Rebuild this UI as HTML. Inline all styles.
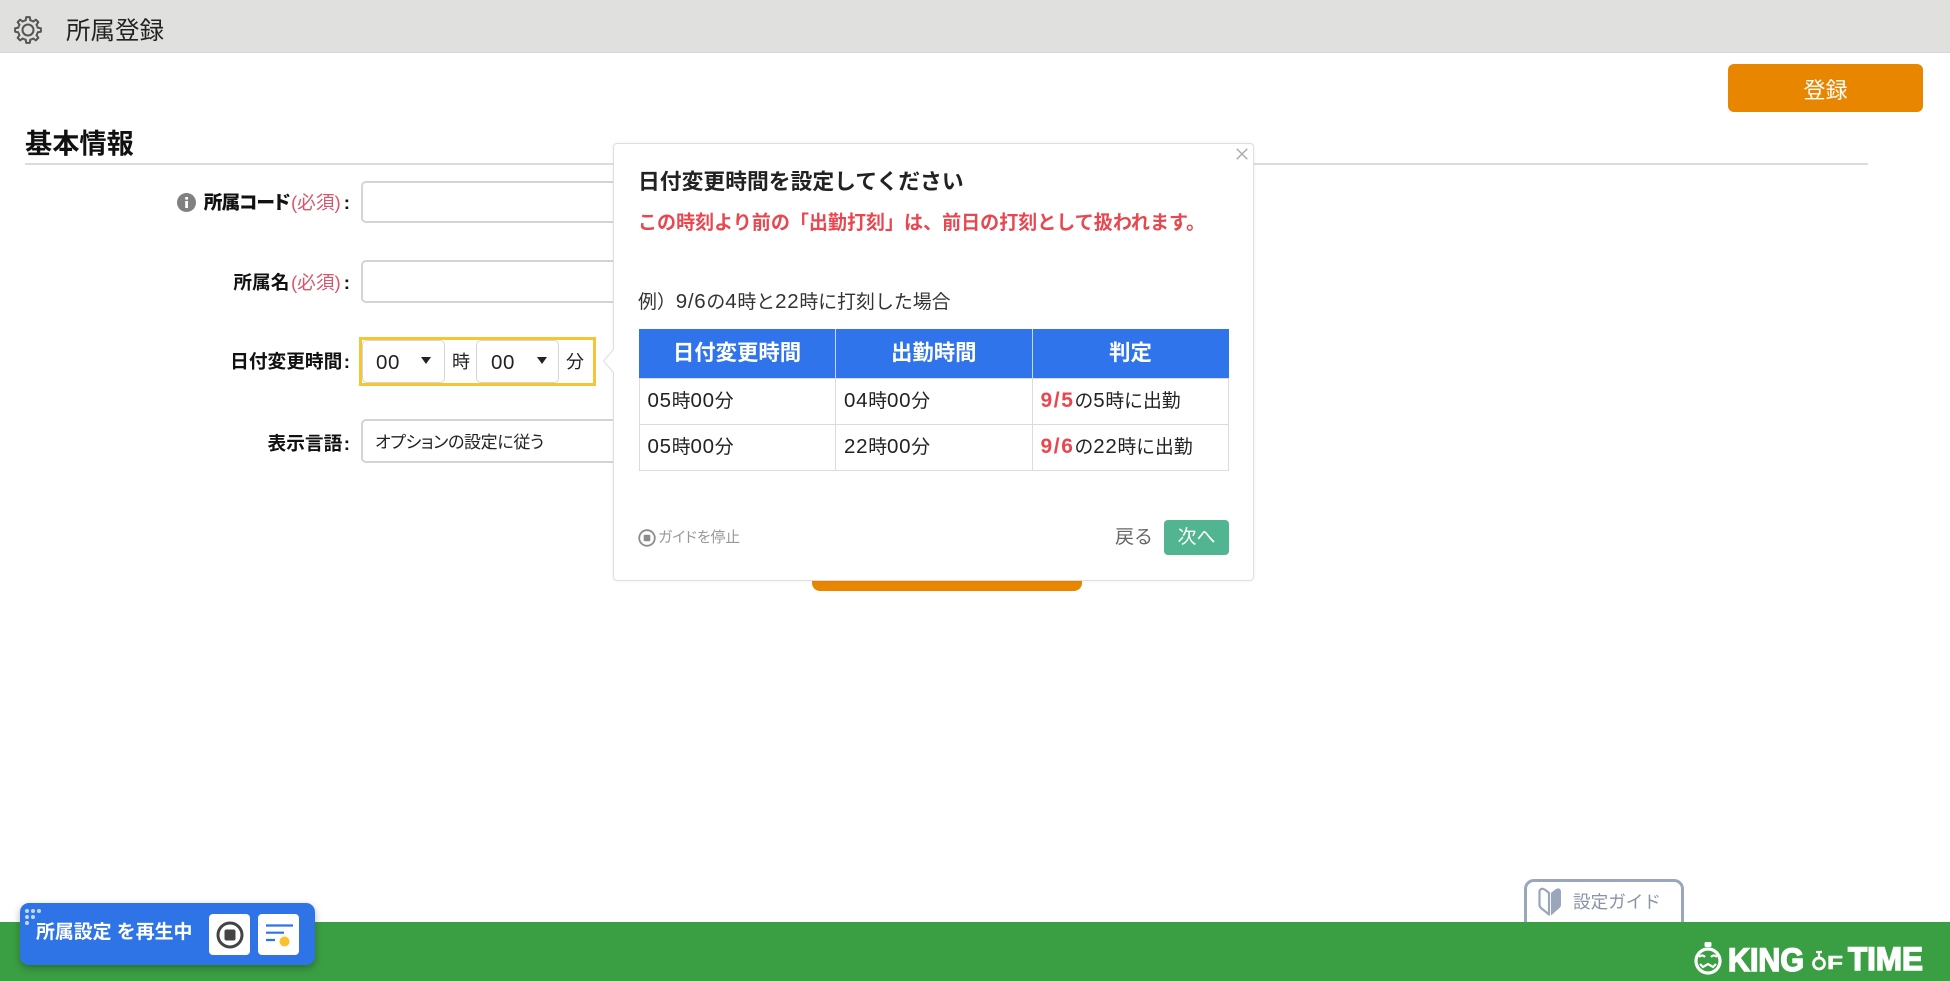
<!DOCTYPE html>
<html lang="ja">
<head>
<meta charset="utf-8">
<title>所属登録</title>
<style>
*{box-sizing:border-box}
html,body{margin:0;padding:0;background:#fff}
body{width:1950px;height:981px;overflow:hidden;position:relative;font-family:"Liberation Sans","Noto Sans CJK JP",sans-serif;color:#222}
.a{position:absolute;white-space:nowrap}
.lab{position:absolute;right:1600px;font-size:18.7px;font-weight:700;line-height:24px;color:#111;white-space:nowrap;font-feature-settings:"palt"}
.lab span{color:#d9566b;font-weight:400;padding:0 1.5px}
.lab i{font-style:normal;margin-left:1.5px}
.inp{position:absolute;left:361px;width:340px;background:#fff;border:2px solid #d4d4d4;border-radius:5px}
.sel{position:absolute;top:340px;width:83px;height:43px;background:#fff;border:1px solid #d6d6d6;border-radius:5px}
.tri{position:absolute;width:0;height:0;border-left:5.5px solid transparent;border-right:5.5px solid transparent;border-top:7px solid #222}
table{position:absolute;left:638.5px;top:329px;width:590.5px;height:141px;border-collapse:collapse;table-layout:fixed;font-size:18.8px}
th{background:#2f74ea;color:#fff;font-size:21.4px;font-weight:700;height:49px;border-right:1px solid #c7d8f6;padding:0 0 4px;text-align:center}
th:last-child{border-right:0}
td{border:1px solid #dcdcdc;padding:0 0 3px 8px;height:46px;color:#222}
td b{color:#e8474f;font-size:21px;letter-spacing:1.6px}
.d{font-size:20.5px;letter-spacing:.7px}
</style>
</head>
<body>
<!-- header -->
<div class="a" style="left:0;top:0;width:1950px;height:53px;background:#e0e0de;border-bottom:1px solid #d8d8d6"></div>
<svg class="a" style="left:12px;top:15px" width="32" height="30" viewBox="-16 -15 32 30"><g fill="none" stroke="#555" stroke-width="2" stroke-linejoin="round"><path d="M-3.830-9.240L-2.250-9.740-1.810-12.870H1.810L2.250-9.740 3.830-9.240"/><path transform="rotate(45)" d="M-3.830-9.240L-2.250-9.740-1.810-12.870H1.810L2.250-9.740 3.830-9.240"/><path transform="rotate(90)" d="M-3.830-9.240L-2.250-9.740-1.810-12.870H1.810L2.250-9.740 3.830-9.240"/><path transform="rotate(135)" d="M-3.830-9.240L-2.250-9.740-1.810-12.870H1.810L2.250-9.740 3.830-9.240"/><path transform="rotate(180)" d="M-3.830-9.240L-2.250-9.740-1.810-12.870H1.810L2.250-9.740 3.830-9.240"/><path transform="rotate(225)" d="M-3.830-9.240L-2.250-9.740-1.810-12.870H1.810L2.250-9.740 3.830-9.240"/><path transform="rotate(270)" d="M-3.830-9.240L-2.250-9.740-1.810-12.870H1.810L2.250-9.740 3.830-9.240"/><path transform="rotate(315)" d="M-3.830-9.240L-2.250-9.740-1.810-12.870H1.810L2.250-9.740 3.830-9.240"/><circle r="5.500"/></g></svg>
<div class="a" style="left:66px;top:15px;font-size:24.5px;line-height:34px;color:#222">所属登録</div>
<div class="a" style="left:1728px;top:64px;width:195px;height:48px;background:#e98600;border-radius:6px;color:#fff;font-size:22px;line-height:53px;text-align:center">登録</div>

<!-- section -->
<div class="a" style="left:25px;top:125px;font-size:27.2px;font-weight:700;line-height:38px;color:#111">基本情報</div>
<div class="a" style="left:25px;top:163px;width:1843px;height:2px;background:#dcdcdc"></div>

<!-- form -->
<svg class="a" style="left:177px;top:193px" width="19" height="19" viewBox="0 0 19 19"><circle cx="9.5" cy="9.5" r="9.5" fill="#808080"/><rect x="8.2" y="8" width="2.8" height="7" fill="#fff"/><rect x="8.2" y="4" width="2.8" height="2.6" fill="#fff"/></svg>
<div class="lab" style="top:191px"><b style="letter-spacing:-.9px">所属コード</b><span>(必須)</span><i>:</i></div>
<div class="inp" style="top:181px;height:42px"></div>
<div class="lab" style="top:271px">所属名<span>(必須)</span><i>:</i></div>
<div class="inp" style="top:260px;height:43px"></div>
<div class="lab" style="top:350px">日付変更時間<i>:</i></div>
<div class="a" style="left:359px;top:337px;width:237px;height:49px;border:3px solid #f4c534"></div>
<div class="sel" style="left:362px"></div>
<div class="a" style="left:376px;top:349px;font-size:20.5px;line-height:28px;letter-spacing:.6px">00</div>
<div class="tri" style="left:421px;top:357px"></div>
<div class="a" style="left:452px;top:349px;font-size:18px;line-height:26px">時</div>
<div class="sel" style="left:476px"></div>
<div class="a" style="left:491px;top:349px;font-size:20.5px;line-height:28px;letter-spacing:.6px">00</div>
<div class="tri" style="left:537px;top:357px"></div>
<div class="a" style="left:566px;top:349px;font-size:18px;line-height:26px">分</div>
<div class="lab" style="top:432px">表示言語<i>:</i></div>
<div class="inp" style="top:419px;height:44px"></div>
<div class="a" style="left:375px;top:431px;font-size:17px;line-height:24px;font-feature-settings:'palt';letter-spacing:-.35px">オプションの設定に従う</div>

<!-- orange button behind popover -->
<div class="a" style="left:812px;top:540px;width:270px;height:51px;background:#e98600;border-radius:8px"></div>

<!-- popover -->
<div class="a" style="left:613px;top:143px;width:641px;height:438px;background:#fff;border:1px solid #dedede;border-radius:4px;box-shadow:0 0 3px rgba(0,0,0,.06)"></div>
<svg class="a" style="left:602px;top:348px" width="13" height="26" viewBox="0 0 13 26"><path d="M12 1 1.5 13 12 25" fill="#fff" stroke="#dedede"/><rect x="12" y="0" width="1.5" height="26" fill="#fff"/></svg>
<svg class="a" style="left:1236px;top:148px" width="12" height="12" viewBox="0 0 12 12"><path d="M.7.7 11.3 11.3M11.3.7.7 11.3" stroke="#aaa" stroke-width="1.4" fill="none"/></svg>
<div class="a" style="left:638px;top:166px;font-size:21.8px;font-weight:700;line-height:32px;color:#222">日付変更時間を設定してください</div>
<div class="a" style="left:638px;top:210px;font-size:19.05px;font-weight:700;line-height:28px;color:#e8474f">この時刻より前の「出勤打刻」は、前日の打刻として扱われます。</div>
<div class="a" style="left:638px;top:289px;font-size:18.9px;line-height:26px;color:#333">例）<span class="d">9/6</span>の<span class="d">4</span>時と<span class="d">22</span>時に打刻した場合</div>
<table>
<tr><th>日付変更時間</th><th>出勤時間</th><th>判定</th></tr>
<tr><td><span class="d">05</span>時<span class="d">00</span>分</td><td><span class="d">04</span>時<span class="d">00</span>分</td><td><b>9/5</b>の<span class="d">5</span>時に出勤</td></tr>
<tr><td><span class="d">05</span>時<span class="d">00</span>分</td><td><span class="d">22</span>時<span class="d">00</span>分</td><td><b>9/6</b>の<span class="d">22</span>時に出勤</td></tr>
</table>
<svg class="a" style="left:638px;top:529px" width="18" height="18" viewBox="0 0 18 18"><circle cx="9" cy="9" r="7.8" fill="none" stroke="#8c8c8c" stroke-width="1.8"/><rect x="5.7" y="5.7" width="6.6" height="6.6" rx="1" fill="#8c8c8c"/></svg>
<div class="a" style="left:658px;top:528px;font-size:14.8px;line-height:20px;color:#999;font-feature-settings:'palt'">ガイドを停止</div>
<div class="a" style="left:1115px;top:524px;font-size:19px;line-height:28px;color:#666">戻る</div>
<div class="a" style="left:1164px;top:520px;width:65px;height:35px;background:#52b591;border-radius:4px;color:#fff;font-size:19px;line-height:35px;text-align:center">次へ</div>

<!-- footer -->
<div class="a" style="left:1524px;top:879px;width:160px;height:46px;background:#fff;border:3px solid #9aa7bb;border-radius:10px 10px 0 0"></div>
<svg class="a" style="left:1538px;top:887px" width="24" height="31" viewBox="0 0 24 31"><path d="M2.500 2.500C4 1 6 1.500 11 6V27.500L3 21Q1.500 19.500 1.500 18V4z" fill="#fff" stroke="#9aa7bb" stroke-width="2.200" stroke-linejoin="round"/><path d="M13 6C18 1.500 20 .5 22 2Q23 3 23 5V18Q23 19.500 21.500 21L13 28.500z" fill="#9aa7bb"/></svg>
<div class="a" style="left:1573px;top:889px;font-size:17.6px;line-height:26px;color:#8a94a6">設定ガイド</div>
<div class="a" style="left:0;top:922px;width:1950px;height:59px;background:#3a9f43"></div>
<svg class="a" style="left:1690px;top:935px" width="240" height="46" viewBox="0 0 240 46">
<rect x="14.500" y="7" width="7" height="5" rx="1.500" fill="#fff"/>
<circle cx="18" cy="26" r="12" fill="none" stroke="#fff" stroke-width="3.200"/>
<path d="M9 22q3-3 6 0M21 22q3-3 6 0" fill="none" stroke="#fff" stroke-width="2.200"/>
<path d="M10 29l3 3 5-3 5 3 3-3" fill="none" stroke="#fff" stroke-width="2.200"/>
<text x="38" y="36" font-family="Liberation Sans" font-weight="700" font-size="32" fill="#fff" textLength="76" lengthAdjust="spacingAndGlyphs" stroke="#fff" stroke-width="1.500">KING</text>
<circle cx="129" cy="28.500" r="5.500" fill="none" stroke="#fff" stroke-width="2.800"/>
<path d="M126 17h6M129 17v5" stroke="#fff" stroke-width="2.200" fill="none"/>
<text x="137" y="34" font-family="Liberation Sans" font-weight="700" font-size="18" fill="#fff" textLength="16" lengthAdjust="spacingAndGlyphs" stroke="#fff" stroke-width=".5">F</text>
<text x="158" y="35" font-family="Liberation Sans" font-weight="700" font-size="32" fill="#fff" textLength="75" lengthAdjust="spacingAndGlyphs" stroke="#fff" stroke-width="1.500">TIME</text>
</svg>

<!-- player -->
<div class="a" style="left:20px;top:903px;width:295px;height:62px;background:#2f74e6;border-radius:9px;box-shadow:0 3px 8px rgba(0,0,0,.3)"></div>
<svg class="a" style="left:24px;top:908px" width="20" height="20" viewBox="0 0 20 20" fill="#c5d7f7"><circle cx="3" cy="3" r="2"/><circle cx="9" cy="3" r="2"/><circle cx="15" cy="3" r="2"/><circle cx="3" cy="9" r="2"/><circle cx="9" cy="9" r="2"/><circle cx="3" cy="15" r="2"/></svg>
<div class="a" style="left:36px;top:920px;font-size:18.9px;font-weight:700;line-height:26px;color:#fff">所属設定 を再生中</div>
<div class="a" style="left:209px;top:914px;width:41px;height:41px;background:#fff;border-radius:4px"></div>
<svg class="a" style="left:216px;top:921px" width="28" height="28" viewBox="0 0 28 28"><circle cx="14" cy="14" r="12" fill="none" stroke="#444" stroke-width="3"/><rect x="8.500" y="8.500" width="11" height="11" rx="2" fill="#444"/></svg>
<div class="a" style="left:258px;top:914px;width:41px;height:41px;background:#fff;border-radius:4px"></div>
<svg class="a" style="left:258px;top:914px" width="41" height="41" viewBox="0 0 41 41"><path d="M8 11.500h27M8 18.700h18M8 26h9" stroke="#2f74e6" stroke-width="2.200" fill="none"/><circle cx="26.500" cy="27.500" r="5" fill="#fbc02d"/></svg>
</body>
</html>
